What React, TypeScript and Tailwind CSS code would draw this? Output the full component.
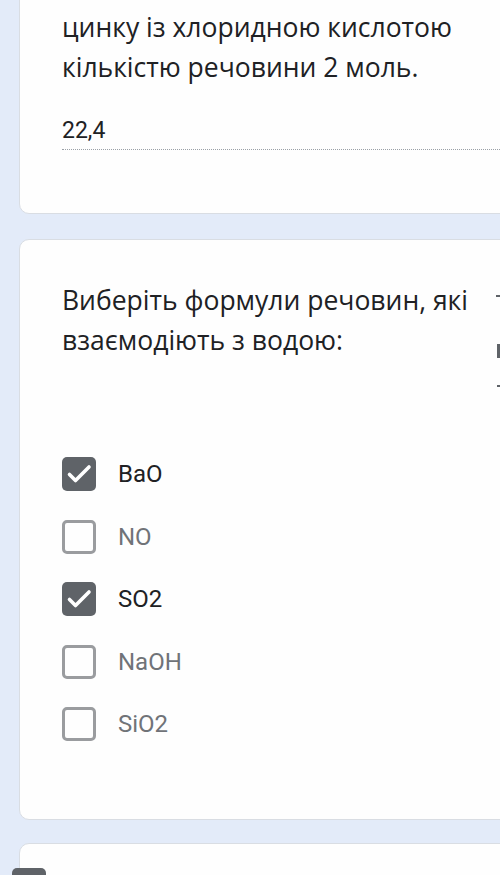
import React from "react";

const Check = () => (
  <svg width="34" height="34" viewBox="0 0 34 34" fill="none">
    <path d="M7.5 17.5l6 6L27 10" stroke="#fff" strokeWidth="3.6" strokeLinecap="round" strokeLinejoin="round" />
  </svg>
);

const options = [
  { label: "BaO", checked: true },
  { label: "NO", checked: false },
  { label: "SO2", checked: true },
  { label: "NaOH", checked: false },
  { label: "SiO2", checked: false },
];

export default function App() {
  return (
    <div className="relative w-[500px] h-[875px] overflow-hidden bg-[#e3ebf9]">
      <div className="flex flex-col pl-[19px]">
        {/* Card 1 */}
        <div className="w-[530px] mt-[-40px] h-[254px] bg-[#fefefe] rounded-[10px] border border-[#d9dde3] pt-[46px] pl-[42px]">
          <div className="text-[26.5px] leading-[40px] text-[#202124]" style={{ fontFamily: '"Open Sans", sans-serif' }}>
            <div>цинку із хлоридною кислотою</div>
            <div>кількістю речовини 2 моль.</div>
          </div>
          <div className="mt-[30px] w-[460px] border-b border-dotted border-[#9aa0a6] pb-[4px]">
            <div className="text-[23px] leading-[28px] text-[#202124]" style={{ fontFamily: 'Roboto, sans-serif' }}>22,4</div>
          </div>
        </div>

        {/* Card 2 */}
        <div className="relative w-[530px] mt-[25px] h-[581px] bg-[#fefefe] rounded-[10px] border border-[#d9dde3] pt-[40px] pl-[42px]">
          <div className="text-[26.5px] leading-[40px] text-[#202124]" style={{ fontFamily: '"Open Sans", sans-serif' }}>
            <div>Виберіть формули речовин, які</div>
            <div>взаємодіють з водою:</div>
          </div>
          <div className="absolute left-[476px] top-[55px] w-[6px] h-[2px] bg-[#5f6368]" />
          <div className="absolute left-[477px] top-[104px] w-[3px] h-[14px] bg-[#5f6368]" />
          <div className="absolute left-[477px] top-[145px] w-[5px] h-[2px] bg-[#5f6368]" />
          <div className="mt-[97px] flex flex-col gap-[28.5px]" style={{ fontFamily: 'Roboto, sans-serif' }}>
            {options.map((o) => (
              <div key={o.label} className="flex items-center h-[34px]">
                {o.checked ? (
                  <div className="w-[34px] h-[34px] rounded-[5px] bg-[#5f6368] flex items-center justify-center">
                    <Check />
                  </div>
                ) : (
                  <div className="w-[34px] h-[34px] rounded-[5px] border-[3px] border-[#9a9c9f]" />
                )}
                <span className={`ml-[22px] text-[24px] leading-[34px] ${o.checked ? "text-[#202124]" : "text-[#707378]"}`}>
                  {o.label}
                </span>
              </div>
            ))}
          </div>
        </div>

        {/* Card 3 */}
        <div className="w-[530px] mt-[23px] h-[100px] bg-[#fefefe] rounded-[10px] border border-[#d9dde3]" />
      </div>
      <div className="absolute left-[12px] top-[868px] w-[34px] h-[20px] rounded-[5px] bg-[#5f6368]" />
    </div>
  );
}
